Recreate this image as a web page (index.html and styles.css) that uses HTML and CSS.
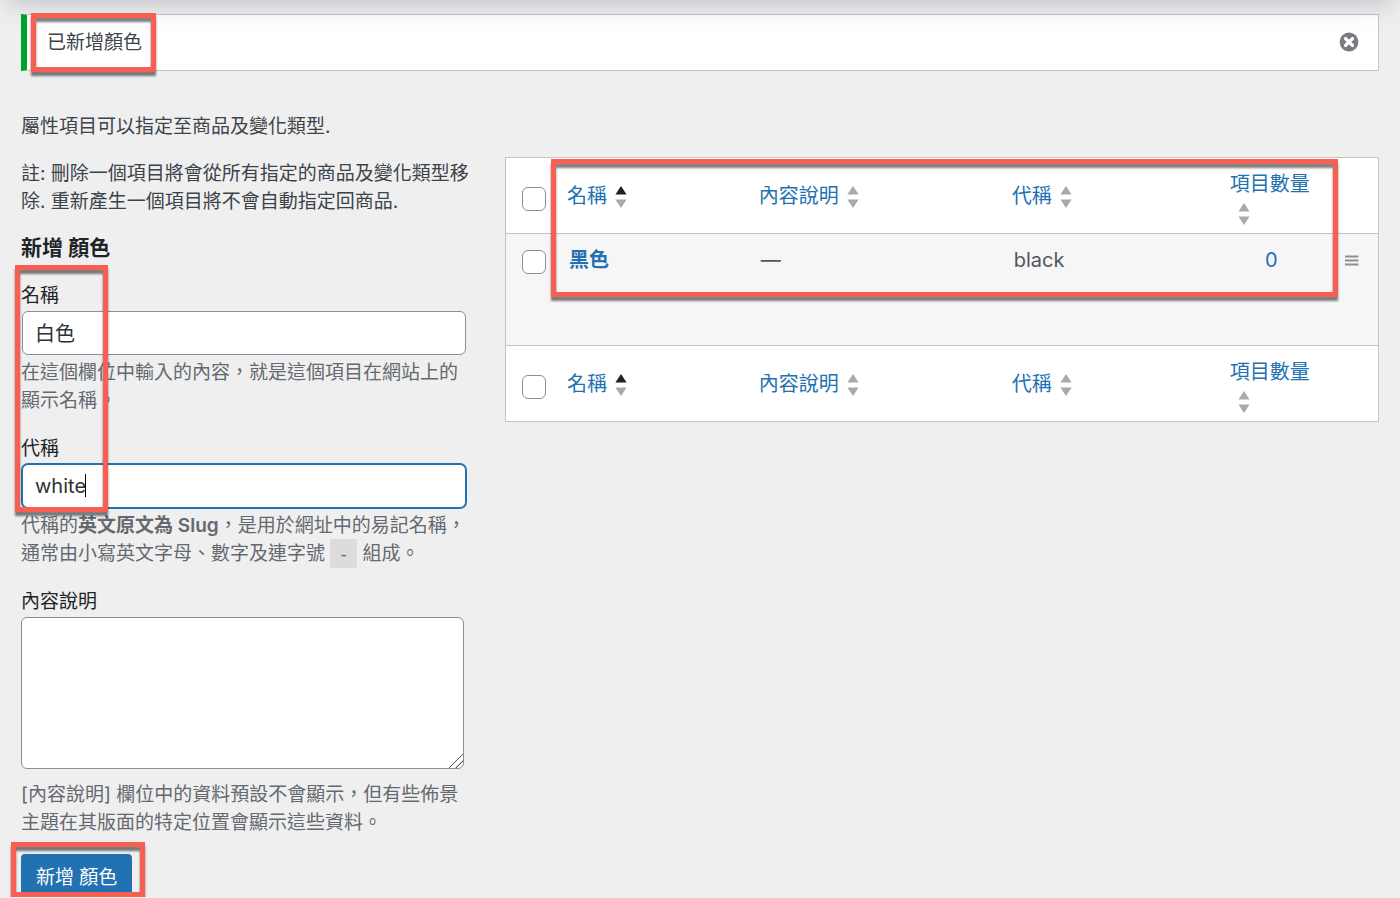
FILE: index.html
```html
<!DOCTYPE html>
<html lang="zh-Hant">
<head>
    <meta charset="UTF-8">
    <meta name="viewport" content="width=device-width, initial-scale=1.0">
    <title>顏色</title>
    <link rel="stylesheet" href="styles.css">
</head>
<body>
    <div class="top-shadow"></div>

    <div class="notice">
        <p>已新增顏色</p>
        <button type="button" class="notice-dismiss" aria-label="關閉">
            <svg width="20" height="20" viewBox="0 0 20 20">
                <circle cx="10" cy="10" r="9.4" fill="#787c82"/>
                <path d="M6.6 6.6l6.8 6.8M13.4 6.6l-6.8 6.8" stroke="#fff" stroke-width="3.4" stroke-linecap="round"/>
            </svg>
        </button>
        <span class="mark mark-notice"></span>
    </div>

    <main class="columns">
        <section class="col-left">
            <p class="intro">屬性項目可以指定至商品及變化類型.</p>
            <p class="intro">註: 刪除一個項目將會從所有指定的商品及變化類型移除. 重新產生一個項目將不會自動指定回商品.</p>

            <h2>新增 顏色</h2>
            <form onsubmit="event.preventDefault()">
                <div class="main-fields">
                    <div class="field">
                        <label for="tag-name">名稱</label>
                        <input type="text" id="tag-name" name="tag-name" value="白色">
                        <p class="help">在這個欄位中輸入的內容，就是這個項目在網站上的顯示名稱。</p>
                    </div>
                    <div class="field">
                        <label for="tag-slug">代稱</label>
                        <div class="slug-box">
                            <input type="text" class="focused" id="tag-slug" name="slug" value="white">
                            <span class="caret"></span>
                        </div>
                        <p class="help">代稱的<strong>英文原文為 Slug</strong>，是用於網址中的易記名稱，通常由小寫英文字母、數字及連字號 <code>-</code> 組成。</p>
                    </div>
                    <span class="mark mark-fields"></span>
                </div>
                <div class="field">
                    <label for="tag-description">內容說明</label>
                    <textarea id="tag-description" name="description"></textarea>
                    <p class="help help-textarea">[內容說明] 欄位中的資料預設不會顯示，但有些佈景主題在其版面的特定位置會顯示這些資料。</p>
                </div>
                <div class="submit">
                    <button type="submit" class="button-primary">新增 顏色</button>
                    <span class="mark mark-submit"></span>
                </div>
            </form>
        </section>

        <section class="col-right">
            <table>
                <colgroup>
                    <col class="col-check">
                    <col class="col-name">
                    <col class="col-description">
                    <col class="col-slug">
                    <col class="col-count">
                    <col class="col-handle">
                </colgroup>
                <thead>
                    <tr>
                        <td class="check"><input type="checkbox" aria-label="全選"></td>
                        <th><a href="#"><span>名稱</span><svg class="sort" width="12" height="22" viewBox="0 0 12 22"><path d="M6 0l5.6 8.6H.4z" fill="#1d2327"/><path d="M6 22l5.6-8.4H.4z"/></svg></a></th>
                        <th><a href="#"><span>內容說明</span><svg class="sort" width="12" height="22" viewBox="0 0 12 22"><path d="M6 0l5.6 8.6H.4z"/><path d="M6 22l5.6-8.4H.4z"/></svg></a></th>
                        <th><a href="#"><span>代稱</span><svg class="sort" width="12" height="22" viewBox="0 0 12 22"><path d="M6 0l5.6 8.6H.4z"/><path d="M6 22l5.6-8.4H.4z"/></svg></a></th>
                        <th class="count"><a href="#"><span>項目數量</span><svg class="sort" width="12" height="22" viewBox="0 0 12 22"><path d="M6 0l5.6 8.6H.4z"/><path d="M6 22l5.6-8.4H.4z"/></svg></a></th>
                        <th></th>
                    </tr>
                </thead>
                <tbody>
                    <tr>
                        <td class="check"><input type="checkbox" aria-label="選取 黑色"></td>
                        <td><a href="#"><strong>黑色</strong></a></td>
                        <td>—</td>
                        <td>black</td>
                        <td class="count"><a href="#">0</a></td>
                        <td class="handle">
                            <svg width="14" height="12" viewBox="0 0 14 12"><path d="M0 1.5h13.4M0 5.5h13.4M0 9.5h13.4" stroke="#8f8f8f" stroke-width="2.2"/></svg>
                        </td>
                    </tr>
                </tbody>
                <tfoot>
                    <tr>
                        <td class="check"><input type="checkbox" aria-label="全選"></td>
                        <th><a href="#"><span>名稱</span><svg class="sort" width="12" height="22" viewBox="0 0 12 22"><path d="M6 0l5.6 8.6H.4z" fill="#1d2327"/><path d="M6 22l5.6-8.4H.4z"/></svg></a></th>
                        <th><a href="#"><span>內容說明</span><svg class="sort" width="12" height="22" viewBox="0 0 12 22"><path d="M6 0l5.6 8.6H.4z"/><path d="M6 22l5.6-8.4H.4z"/></svg></a></th>
                        <th><a href="#"><span>代稱</span><svg class="sort" width="12" height="22" viewBox="0 0 12 22"><path d="M6 0l5.6 8.6H.4z"/><path d="M6 22l5.6-8.4H.4z"/></svg></a></th>
                        <th class="count"><a href="#"><span>項目數量</span><svg class="sort" width="12" height="22" viewBox="0 0 12 22"><path d="M6 0l5.6 8.6H.4z"/><path d="M6 22l5.6-8.4H.4z"/></svg></a></th>
                        <th></th>
                    </tr>
                </tfoot>
            </table>
            <span class="mark mark-table"></span>
        </section>
    </main>
</body>
</html>
```
FILE: styles.css
```css
* {
    margin: 0;
    padding: 0;
    box-sizing: border-box;
}

body {
    padding: 14px 21px 0;
    background-color: #efefef;
    color: #3c434a;
    font-family: Inter, "Noto Sans CJK TC", sans-serif;
    font-size: 19px;
    line-height: 28px;
    overflow: hidden;
}

a {
    color: #2271b1;
    text-decoration: none;
}

a:hover {
    color: #135e96;
}

.top-shadow {
    position: absolute;
    top: -20px;
    left: 12px;
    right: 12px;
    height: 16px;
    box-shadow: 0 0 28px 4px rgba(60, 65, 90, 0.35);
    z-index: 1;
    pointer-events: none;
}

/* notice */
.notice {
    position: relative;
    display: flex;
    justify-content: space-between;
    align-items: center;
    height: 57px;
    padding: 0 19px 0 20px;
    background-color: #fff;
    border: 1px solid #c3c4c7;
    border-left: 6px solid #00a32a;
}

.notice-dismiss {
    display: flex;
    padding-bottom: 2px;
    background: none;
    border: none;
    cursor: pointer;
}

/* red frames */
.mark {
    position: absolute;
    border: 5px solid #f75f52;
    filter: drop-shadow(0 4px 1px rgba(0, 0, 0, 0.5));
    pointer-events: none;
    z-index: 2;
}

.mark-notice {
    top: -2px;
    left: 4px;
    width: 125px;
    height: 59px;
}

.mark-fields {
    top: -17px;
    left: -6px;
    width: 93px;
    height: 247px;
}

.mark-submit {
    top: -12px;
    left: -10px;
    width: 134px;
    height: 55px;
}

.mark-table {
    top: 46px;
    left: 46px;
    right: 41px;
    height: 138px;
}

/* layout */
.columns {
    display: grid;
    grid-template-columns: 452px minmax(0, 1fr);
    gap: 32px;
    padding-top: 42px;
}

.intro {
    margin-bottom: 19px;
}

h2 {
    margin: -1px 0 20px;
    color: #1d2327;
    font-size: 21px;
    font-weight: 600;
}

/* form */
.main-fields,
.slug-box,
.submit,
.col-right {
    position: relative;
}

.field {
    margin-bottom: 20px;
}

label {
    display: block;
    margin-bottom: 1px;
    color: #1d2327;
}

input[type="text"] {
    display: block;
    width: 444px;
    height: 44px;
    margin: 0 1px;
    padding: 0 12px 2px;
    background-color: #fff;
    border: 1px solid #8c8f94;
    border-radius: 6px;
    color: #2c3338;
    font-family: inherit;
    font-size: 20px;
    outline: none;
}

input.focused {
    padding-bottom: 0;
    border-color: #2271b1;
    box-shadow: 0 0 0 1px #2271b1;
}

.caret {
    position: absolute;
    top: 10px;
    left: 64px;
    width: 1px;
    height: 23px;
    background-color: #000;
}

textarea {
    display: block;
    width: 443px;
    height: 152px;
    padding: 4px 12px;
    background-color: #fff;
    border: 1px solid #8c8f94;
    border-radius: 6px;
    font-family: inherit;
    font-size: 20px;
    resize: vertical;
}

textarea::-webkit-resizer {
    background: linear-gradient(135deg, transparent 50%, #555 51%, #555 55%, transparent 56%, transparent 73%, #555 74%, #555 78%, transparent 79%);
}

.help {
    margin-top: 4px;
    color: #646970;
}

.help-textarea {
    margin-top: 12px;
}

strong {
    font-weight: 600;
}

code {
    padding: 4px 8px;
    background-color: #dcdcde;
    font-family: "DejaVu Sans Mono", monospace;
    font-size: 18px;
}

.submit {
    margin-top: -3px;
}

.button-primary {
    display: block;
    height: 43px;
    padding: 0 15px;
    background-color: #2271b1;
    border: none;
    border-radius: 4px;
    color: #fff;
    font-family: inherit;
    font-size: 19px;
    cursor: pointer;
}

/* table */
.col-right {
    padding-top: 44px;
}

table {
    width: 100%;
    table-layout: fixed;
    border-collapse: separate;
    border-spacing: 0;
    background-color: #fff;
    border: 1px solid #c3c4c7;
    font-size: 20px;
}

.col-check {
    width: 53px;
}

.col-name {
    width: 22%;
}

.col-description {
    width: 29%;
}

.col-slug {
    width: 25%;
}

.col-count {
    width: 13%;
}

th {
    height: 75px;
    padding: 0 8px;
    font-weight: 400;
    text-align: left;
    vertical-align: middle;
}

th.count {
    padding-top: 5px;
}

tbody td {
    height: 113px;
    padding: 12px 10px;
    background-color: #f6f6f7;
    border-top: 1px solid #c3c4c7;
    border-bottom: 1px solid #c3c4c7;
    color: #50575e;
    vertical-align: top;
}

thead .check,
tfoot .check {
    padding: 7px 0 0 16px;
    vertical-align: middle;
}

tbody .check {
    padding: 16px 0 0 16px;
}

tbody .count {
    padding-left: 0;
    padding-right: 14px;
    text-align: center;
}

input[type="checkbox"] {
    display: block;
    width: 24px;
    height: 24px;
    appearance: none;
    background-color: #fff;
    border: 1px solid #8c8f94;
    border-radius: 6px;
}

.sort {
    margin-left: 8px;
    fill: #a7aaad;
    vertical-align: middle;
}
```
